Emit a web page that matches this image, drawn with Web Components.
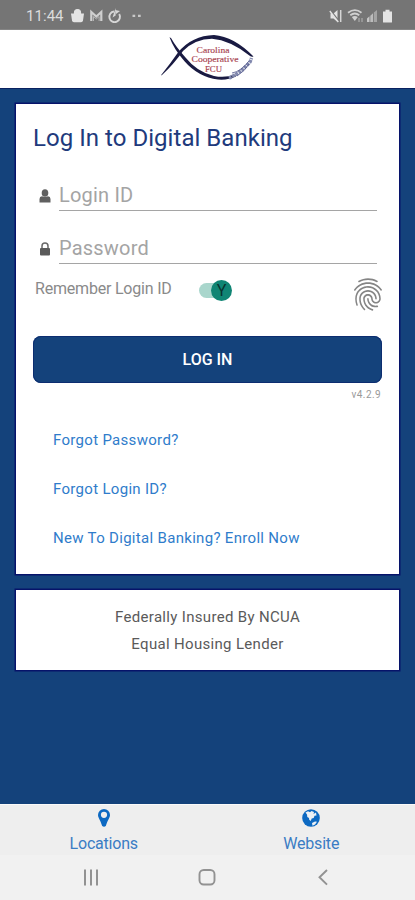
<!DOCTYPE html>
<html lang="en">
<head>
<meta charset="utf-8">
<title>Digital Banking</title>
<style>
html,body{margin:0;height:100%}
body{font-family:Roboto,"Liberation Sans",sans-serif;background:#14427b;overflow:hidden}
</style>
</head>
<body>
<banking-app></banking-app>
<script>
const define = (name, html) => {
  const t = document.createElement('template');
  t.innerHTML = html;
  customElements.define(name, class extends HTMLElement {
    constructor() {
      super();
      this.attachShadow({mode: 'open'}).append(t.content.cloneNode(true));
    }
  });
};

define('status-bar', `
<style>
:host{display:flex;height:30px;box-sizing:border-box;background:#757575;border-bottom:1px solid #858585;padding:3px 22px 0 26px;align-items:center;justify-content:space-between;color:#dcdcdc;font-size:15px;flex:none}
.l,.r{display:flex;align-items:center}
.t{width:45px;letter-spacing:.05px}
svg{display:block;fill:#e4e4e4}
</style>
<div class="l"><span class="t">11:44</span>
<svg width="72" height="16" viewBox="0 0 72 16">
 <path d="M0 5.500h13l-1 7q-.3 1.800-2 1.800H3q-1.700 0-2-1.800z"/><path d="M3.500 6V4.500a3 3 0 0 1 6 0V6z" stroke="#e4e4e4" stroke-width="1.200"/>
 <path d="M20.300 13V4l5 4.500 5-4.500v9" fill="none" stroke="#cfcfcf" stroke-width="2.200"/><path d="M22.500 13V8.500l2.800 2.500 2.800-2.500V13" fill="none" stroke="#b5b5b5" stroke-width="1"/>
 <path d="M43 3.500a5.300 5.300 0 1 0 5.200 2.500" fill="none" stroke="#d6d6d6" stroke-width="1.900"/><path d="M44.500 0l.2 7.500-3.200 2 1-3z" fill="#d6d6d6"/><path d="M44 2l5 1-4 3z" fill="#d6d6d6"/>
 <rect x="61.500" y="6.700" width="2.700" height="2.300" fill="#c8c8c8"/><rect x="67" y="6.700" width="2.700" height="2.300" fill="#c8c8c8"/>
</svg></div>
<div class="r"><svg width="64" height="16" viewBox="0 0 64 16">
 <path d="M1.500 5.500h3L8.500 2v12l-4-3.500h-3z"/><path d="M1 2l9.500 12" stroke="#757575" stroke-width="2"/><path d="M.8 3l8.500 11" stroke="#e4e4e4" stroke-width="1.300"/><path d="M11.700 2v12" stroke="#d6d6d6" stroke-width="1.500"/>
 <g fill="none" stroke="#d0d0d0" stroke-width="1.800"><path d="M19 4.800q7-5.200 13.500 0M21.300 7.300q4.500-3.500 9 0"/></g><path d="M22.800 9q3-2 6 0l-3 4z" fill="#d0d0d0"/><path d="M30 14v-4m3 4v-4" stroke="#a6a6a6" stroke-width="1.300"/>
 <path d="M38 14v-3.500l2.500-2.200V14z" fill="#c6c6c6"/><path d="M41.300 14V7.700L44 5.300V14z" fill="#bcbcbc"/><path d="M44.800 14V4.600l3.200-2.600v12z" fill="#a4a4a4"/>
 <path d="M54 3.500h2.500V1.700h4v1.800H63V14q0 .6-.6.6h-7.800q-.6 0-.6-.6z"/>
</svg></div>`);

define('brand-header', `
<style>
:host{display:flex;justify-content:center;height:58px;background:#fff;flex:none}
svg{display:block}
text{font-family:"Liberation Serif",serif;fill:#a84350;stroke:#a84350;stroke-width:.15;text-anchor:middle}
</style>
<svg width="115" height="58" viewBox="0 0 115 58">
 <g fill="#191a42">
 <path d="M10.800 45.500Q20 34 28 22.500 42 5.500 64 5q20 1.500 39.500 21.500-2 .8-3.800-.8Q80 10.300 62 8.800 45 9 33 21 24 34 12 45z"/>
 <path d="M19.500 7.200q4.500 12.300 15 24Q48 46.800 68 49.500q10 .8 18-3l-1-2Q75 48.300 64 46 47 42 35.500 27.500 26 17 21 8z"/>
 </g>
 <path d="M79 48q10-4 21-16l1.500-4" fill="none" stroke="#8188ae" stroke-width="3.500" stroke-dasharray="3 .7"/>
 <path d="M82 43q9-1.500 17-12M87 46q8-5 12-12" fill="none" stroke="#4c5388" stroke-width=".8"/>
 <g font-size="8.700"><text x="63" y="22.500" textLength="33" lengthAdjust="spacingAndGlyphs">Carolina</text><text x="65" y="32" textLength="47" lengthAdjust="spacingAndGlyphs">Cooperative</text><text x="63.500" y="41.500" font-size="8.300" textLength="17" lengthAdjust="spacingAndGlyphs">FCU</text></g>
</svg>`);

define('info-card', `
<style>
:host{display:block;background:#fff;box-shadow:0 0 0 1.500px #06136a;box-sizing:border-box;flex:none}
</style><slot></slot>`);

define('input-row', `
<style>
:host{display:flex;align-items:flex-end;height:30px;margin:0 5px 0 6px}
.i{width:12px;height:22px;margin-right:8px}
.f{flex:1;height:30px;box-sizing:border-box;border-bottom:1.500px solid #a5a5a5;font-size:20px;line-height:29px;letter-spacing:.2px;color:#a4a4a4;white-space:nowrap}
</style><div class="i"><slot name="icon"></slot></div><div class="f"><slot></slot></div>`);

define('toggle-switch', `
<style>
:host{display:grid;grid-template-columns:12px 21px;align-items:center;width:33px;height:21px}
i{height:15px;border-radius:8px;background:#a9d6cc;grid-area:1/1/2/3;width:28px}
span{grid-area:1/2;width:21px;height:21px;border-radius:50%;background:#108574;color:#08332f;font-size:16px;line-height:22px;text-align:center}
</style><i></i><span><slot></slot></span>`);

define('login-form', `
<style>
:host{display:flex;flex-direction:column;height:470px;box-sizing:border-box;padding:18px 17px 0 17px}
h1{margin:0;font-weight:400;font-size:24px;line-height:32px;color:#213a7c;letter-spacing:.04px;white-space:nowrap}
svg{display:block}
.id{margin-top:27px}.pw{margin-top:23px}
.rem{display:flex;align-items:flex-start;height:46px;margin-top:11px;color:#8a8a8a}
.rem b{font-weight:400;font-size:16px;letter-spacing:-.2px;line-height:27px;width:164px;padding-left:2px;white-space:nowrap}
toggle-switch{margin-top:5px}
.fp{margin:3px 0 0 auto}
button{border:0;margin:15px 0 0;height:47px;border-radius:8px;background:#14427b;box-shadow:inset 0 0 0 1px #0c2d70;color:#fff;font:500 16px/48px Roboto,sans-serif;padding:0;letter-spacing:0;flex:none}
.v{align-self:flex-end;font-size:10px;line-height:12px;margin:6px 1px 0 0;color:#999;letter-spacing:.4px}
nav{display:flex;flex-direction:column;gap:25px;padding:27px 0 0 20px}
a{color:#2f7ccb;font-size:15px;line-height:24px;letter-spacing:.31px;white-space:nowrap}
</style>
<h1>Log In to Digital Banking</h1>
<input-row class="id"><svg slot="icon" width="12" height="15" viewBox="0 0 12 15" fill="#606060"><ellipse cx="6" cy="4" rx="3.300" ry="3.800"/><path d="M.5 13.500V10Q.5 7.500 3 7.200q3 1.500 6 0 2.500.3 2.500 2.800v3.500z"/></svg>Login ID</input-row>
<input-row class="pw"><svg slot="icon" width="12" height="15" viewBox="0 0 12 15"><path d="M3 7V4a3 3 0 0 1 6 0V7" fill="none" stroke="#686868" stroke-width="1.500"/><rect x="1" y="6" width="10" height="7.500" rx="1" fill="#5a5a5a"/></svg>Password</input-row>
<div class="rem"><b>Remember Login ID</b><toggle-switch>Y</toggle-switch>
<svg class="fp" width="28" height="33" viewBox="3 1.800 18 20.400" preserveAspectRatio="none" fill="#858585"><path d="M17.810 4.470c-.08 0-.16-.02-.23-.06C15.660 3.420 14 3 12.010 3c-1.980 0-3.860.47-5.570 1.410-.24.13-.54.04-.68-.2-.13-.24-.04-.55.2-.68C7.820 2.520 9.860 2 12.010 2c2.130 0 3.990.47 6.030 1.520.25.13.34.43.21.67-.09.18-.26.28-.44.28zM3.500 9.720c-.1 0-.2-.03-.29-.09-.23-.16-.28-.47-.12-.7.99-1.400 2.250-2.500 3.750-3.270C9.980 4.040 14 4.030 17.150 5.650c1.500.77 2.760 1.860 3.750 3.250.16.22.11.54-.12.7-.23.16-.54.11-.7-.12-.9-1.260-2.040-2.250-3.390-2.940-2.870-1.470-6.540-1.470-9.400.01-1.360.7-2.500 1.700-3.400 2.960-.08.14-.23.21-.39.21zm6.250 12.070c-.13 0-.26-.05-.35-.15-.87-.87-1.340-1.430-2.010-2.640-.69-1.230-1.050-2.730-1.050-4.340 0-2.970 2.540-5.390 5.660-5.390s5.660 2.420 5.660 5.390c0 .28-.22.5-.5.5s-.5-.22-.5-.5c0-2.420-2.090-4.390-4.660-4.390-2.570 0-4.660 1.970-4.660 4.390 0 1.440.32 2.770.93 3.850.64 1.150 1.080 1.640 1.850 2.420.19.2.19.51 0 .71-.11.1-.24.15-.37.15zm7.170-1.850c-1.190 0-2.240-.3-3.100-.89-1.490-1.010-2.380-2.650-2.380-4.390 0-.28.22-.5.5-.5s.5.22.5.5c0 1.410.72 2.740 1.940 3.560.71.48 1.540.71 2.540.71.24 0 .64-.03 1.040-.1.27-.05.53.13.58.41.05.27-.13.53-.41.58-.57.11-1.070.12-1.210.12zM14.910 22c-.04 0-.09-.01-.13-.02-1.590-.44-2.630-1.030-3.720-2.100-1.400-1.390-2.170-3.240-2.170-5.220 0-1.620 1.380-2.940 3.080-2.940 1.700 0 3.080 1.320 3.080 2.940 0 1.070.93 1.940 2.080 1.940s2.080-.87 2.080-1.940c0-3.770-3.250-6.830-7.250-6.830-2.840 0-5.440 1.580-6.610 4.030-.39.81-.59 1.760-.59 2.800 0 .78.07 2.010.67 3.610.1.26-.03.55-.29.64-.26.1-.55-.04-.64-.29-.49-1.310-.73-2.610-.73-3.960 0-1.200.23-2.290.68-3.240 1.330-2.790 4.280-4.600 7.510-4.600 4.550 0 8.250 3.510 8.250 7.830 0 1.620-1.380 2.940-3.080 2.940s-3.080-1.320-3.080-2.940c0-1.070-.93-1.940-2.080-1.940s-2.080.87-2.080 1.940c0 1.710.66 3.310 1.870 4.510.95.94 1.860 1.460 3.270 1.850.27.07.42.35.35.61-.05.23-.26.38-.47.38z"/></svg></div>
<button>LOG IN</button>
<div class="v">v4.2.9</div>
<nav><a>Forgot Password?</a><a>Forgot Login ID?</a><a>New To Digital Banking? Enroll Now</a></nav>`);

define('tab-item', `
<style>
:host{display:flex;flex-direction:column;align-items:center;width:50%;color:#3a7cc4;font-size:16px;line-height:22px;letter-spacing:-.2px}
div{height:28px;padding-top:4px;box-sizing:border-box}
</style><div><slot name="icon"></slot></div><slot></slot>`);

define('system-nav', `
<style>:host{display:block;height:45px;background:#f1f1f1;flex:none}svg{display:block}</style>
<svg width="415" height="45" viewBox="0 0 415 45" fill="none" stroke="#929292"><path d="M85 14.500v16M91 14.500v16M97 14.500v16" stroke-width="2"/><rect x="199.500" y="15" width="15" height="14.500" rx="4.200" stroke-width="1.900"/><path d="M327 15l-7.500 7.300 7.500 7.300" stroke-width="1.900"/></svg>`);

define('banking-app', `
<style>
:host{display:flex;flex-direction:column;width:415px;height:900px;background:#14427b}
main{flex:1;display:flex;flex-direction:column;gap:16px;padding:15px 16px 0;border-top:1px solid #0a2260}
.legal{text-align:center;height:80px;box-sizing:border-box;padding-top:14px;font-size:15px;line-height:27px;color:#5a5a5a;letter-spacing:.32px}
.legal div{white-space:nowrap}
footer{display:flex;height:51px;background:#eee;border-top:1px solid #fafafa;flex:none;box-sizing:border-box}
svg{display:block}
</style>
<status-bar></status-bar><brand-header></brand-header>
<main><info-card><login-form></login-form></info-card>
<info-card class="legal"><div>Federally Insured By NCUA</div><div>Equal Housing Lender</div></info-card></main>
<footer><tab-item><svg slot="icon" width="12" height="18" viewBox="0 0 12 18" fill="#0d69c2"><path fill-rule="evenodd" d="M6 0a6 6 0 0 1 6 6c0 2.500-2.300 5-4.200 11q-1.800 1.600-3.600 0C2.300 11 0 8.500 0 6a6 6 0 0 1 6-6zm0 2.700a3.100 3.100 0 1 0 0 6.200 3.100 3.100 0 0 0 0-6.200z"/></svg>Locations</tab-item>
<tab-item><svg slot="icon" width="18" height="18" viewBox="0 0 18 18"><circle cx="9" cy="9" r="8.800" fill="#0d69c2"/><path d="M3.500 3.500L6 2.300l2 1 1.500-1.200L12 3l-.5 2 2.500-1.500.5 3-2 .3-.8 2.200-2 .5-1 2.500-1.500-1.200L7 9 5.300 8 5 5.500zM10 14l3-1.500 2 .3-2 2.700-2.500 1.300z" fill="#edf1f5"/></svg>Website</tab-item></footer>
<system-nav></system-nav>`);
</script>
</body>
</html>
